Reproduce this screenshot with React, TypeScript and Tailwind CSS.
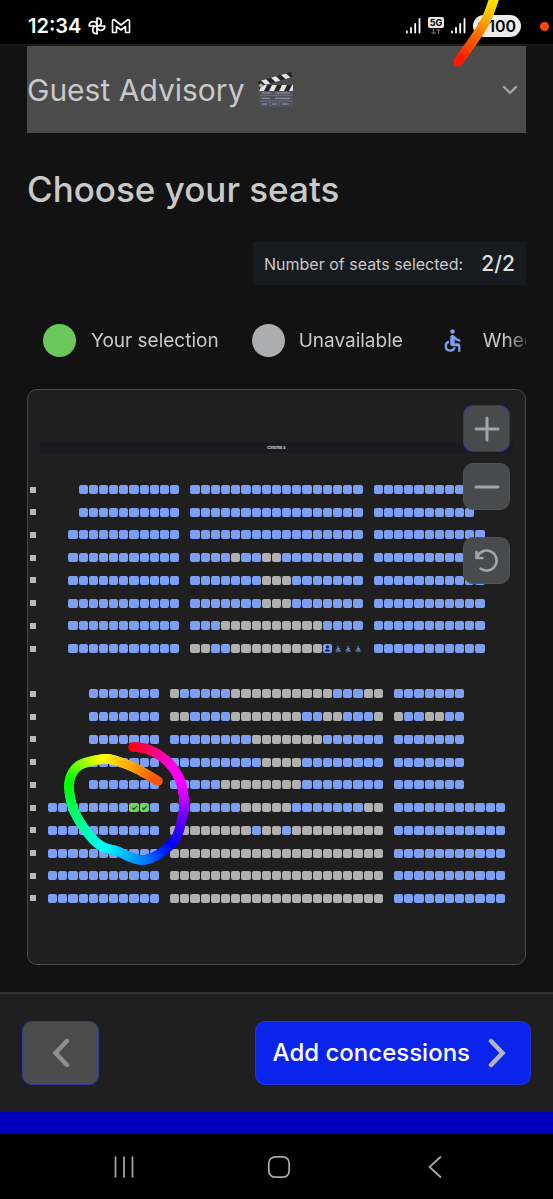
import { Fragment } from "react";
import { MdAccessible } from "react-icons/md";

type Block = { start: number; seats: string };
type Row = { label: string; blocks: Block[] } | null;

// b: available, g: unavailable, s: selected, p: companion, w: wheelchair space
const b = (n: number) => "b".repeat(n);
const g = (n: number) => "g".repeat(n);
const row = (label: string, ...blocks: [number, string][]): Row => ({
  label,
  blocks: blocks.map(([start, seats]) => ({ start, seats })),
});

const ROWS: Row[] = [
  row("A", [3, b(10)], [14, b(17)], [32, b(10)]),
  row("B", [3, b(10)], [14, b(17)], [32, b(10)]),
  row("C", [2, b(11)], [14, b(17)], [32, b(11)]),
  row("D", [2, b(11)], [14, b(4) + g(1) + b(2) + g(2) + b(8)], [32, b(11)]),
  row("E", [2, b(11)], [14, b(7) + g(3) + b(7)], [32, b(11)]),
  row("F", [2, b(11)], [14, b(7) + g(3) + b(7)], [32, b(11)]),
  row("G", [2, b(11)], [14, b(3) + g(10) + b(4)], [32, b(11)]),
  row("H", [2, b(11)], [14, g(2) + b(2) + g(9) + "pwww"], [32, b(11)]),
  null,
  row("J", [4, b(7)], [12, g(1) + b(5) + g(10) + b(3) + g(2)], [34, b(7)]),
  row("K", [4, b(7)], [12, g(2) + b(4) + g(7) + b(2) + g(2) + b(3) + g(1)], [34, "gbbggbb"]),
  row("L", [4, b(7)], [12, b(8) + g(7) + b(6)], [34, b(7)]),
  row("M", [4, b(7)], [12, b(9) + g(4) + b(8)], [34, b(7)]),
  row("N", [4, b(7)], [12, b(5) + g(8) + b(8)], [34, b(7)]),
  row("O", [0, b(8) + "ss" + b(1)], [12, b(7) + g(5) + b(7) + g(2)], [34, b(11)]),
  row("P", [0, b(11)], [12, g(8) + b(1) + g(2) + b(1) + g(9)], [34, b(11)]),
  row("Q", [0, b(11)], [12, g(21)], [34, b(11)]),
  row("R", [0, b(11)], [12, g(21)], [34, b(11)]),
  row("S", [0, b(11)], [12, g(21)], [34, b(11)]),
];

const SEAT_CLASS: Record<string, string> = {
  b: "bg-[#7b9ff5]",
  g: "bg-[#b0b0ae]",
  s: "bg-[#77cf6b]",
  p: "bg-[#7b9ff5]",
  w: "text-[#7b9ff5]",
};

function Seat({ kind, name }: { kind: string; name: string }) {
  return (
    <button
      type="button"
      aria-label={name}
      disabled={kind === "g"}
      className={`flex h-[9px] items-center justify-center rounded-[2px] ${SEAT_CLASS[kind]}`}
    >
      {kind === "s" && (
        <svg viewBox="0 0 9 9" className="size-[9px]" fill="none" stroke="#17501b" strokeWidth="1.2">
          <path d="M2 4.7 3.8 6.3 7 2.8" />
        </svg>
      )}
      {kind === "p" && (
        <svg viewBox="0 0 9 9" className="size-[9px]" fill="#12234f">
          <circle cx="4.5" cy="3" r="1.7" />
          <path d="M1.8 7.6V6.6Q2 5.4 4.5 5.3 7 5.4 7.2 6.6v1z" />
        </svg>
      )}
      {kind === "w" && <MdAccessible size={8} />}
    </button>
  );
}

function SeatMap() {
  return (
    <div className="flex aspect-[458/419] flex-col justify-between">
      {ROWS.map((r, i) =>
        r === null ? (
          <div key={i} className="h-[9px]" />
        ) : (
          <div key={i} className="flex items-center">
            <span className="-ml-[18px] mr-3 size-[6px] shrink-0 bg-[#b8b8b6]" />
            <div className="grid flex-1 grid-cols-[repeat(45,minmax(0,1fr))] gap-px">
              {r.blocks.map((blk, bi) => {
                const prev = r.blocks[bi - 1];
                const from = prev ? prev.start + prev.seats.length : 0;
                const space = blk.start - from;
                return (
                  <Fragment key={blk.start}>
                    {Array.from({ length: space }, (_, k) => (
                      <span key={`gap${k}`} />
                    ))}
                    {[...blk.seats].map((kind, k) => (
                      <Seat key={k} kind={kind} name={`Seat ${r.label}${blk.start + k + 1}`} />
                    ))}
                  </Fragment>
                );
              })}
            </div>
          </div>
        ),
      )}
    </div>
  );
}

// x, y, hue
type Point = [number, number, number];

const LOOP: Point[] = [
  [133, 747, 358], [147, 749, 345], [162, 757, 325], [173, 768, 308], [181, 783, 300],
  [184, 800, 290], [183, 814, 274], [177, 836, 252], [167, 848, 240], [154, 857, 226],
  [142, 860, 212], [130, 857, 204], [117, 851, 194], [103, 847, 182], [92, 838, 172],
  [80, 822, 158], [72, 805, 142], [69, 785, 124], [73, 772, 114], [82, 764, 95],
  [103, 759, 65], [117, 761, 52], [137, 769, 38], [158, 781, 20],
];

const TAIL: Point[] = [
  [495, -4, 60], [487, 18, 46], [477, 35, 30], [458, 62, 6],
];

function smooth(points: Point[]): Point[] {
  const out: Point[] = [];
  const steps = 8;
  for (let i = 0; i < points.length - 1; i++) {
    const p0 = points[Math.max(0, i - 1)];
    const p1 = points[i];
    const p2 = points[i + 1];
    const p3 = points[Math.min(points.length - 1, i + 2)];
    for (let s = 0; s < steps; s++) {
      const t = s / steps;
      const at = (k: 0 | 1) =>
        0.5 *
        (2 * p1[k] +
          (p2[k] - p0[k]) * t +
          (2 * p0[k] - 5 * p1[k] + 4 * p2[k] - p3[k]) * t * t +
          (3 * p1[k] - p0[k] - 3 * p2[k] + p3[k]) * t * t * t);
      out.push([at(0), at(1), p1[2] + (p2[2] - p1[2]) * t]);
    }
  }
  out.push(points[points.length - 1]);
  return out;
}

function RainbowStroke({ points }: { points: Point[] }) {
  const pts = smooth(points);
  return (
    <g strokeWidth="9.5" strokeLinecap="round">
      {pts.slice(1).map((p, i) => (
        <line key={i} x1={pts[i][0]} y1={pts[i][1]} x2={p[0]} y2={p[1]} stroke={`hsl(${p[2]} 100% 50%)`} />
      ))}
    </g>
  );
}

function SignalIcon() {
  return (
    <svg viewBox="0 0 15 16" className="h-4 w-[15px]" fill="none" stroke="#fff" strokeWidth="1.8" strokeLinecap="round">
      <path d="M1 13.5v1M5 10v4.5M9.2 6v8.5M13.5 1v13.5" />
    </svg>
  );
}

function StatusBar() {
  return (
    <div className="flex h-11 items-center bg-black pt-2 pr-1 pl-7 text-white">
      <span className="text-[20px] leading-6 font-semibold">12:34</span>
      <svg viewBox="0 0 18 18" className="ml-[7px] size-[18px]" fill="none" stroke="#fff" strokeWidth="1.7" strokeLinejoin="round">
        <path d="M9 9V1.2C12 1.2 13.3 3 13.3 5.2 13.3 7 12 9 9 9ZM9 9h7.8C16.8 12 15 13.3 12.8 13.3 11 13.3 9 12 9 9ZM9 9v7.8C6 16.8 4.7 15 4.7 12.8 4.7 11 6 9 9 9ZM9 9H1.2C1.2 6 3 4.7 5.2 4.7 7 4.7 9 6 9 9Z" />
      </svg>
      <svg viewBox="0 0 20 16" className="ml-[5px] h-4 w-5" fill="none" stroke="#fff" strokeWidth="1.6" strokeLinejoin="round">
        <path d="M1.5 14.5V3Q1.5 1.5 3 1.5L10 7 17 1.5Q18.5 1.5 18.5 3V14.5H14.5V8.5L10 12 5.5 8.5V14.5Z" />
      </svg>
      <div className="ml-auto flex items-center gap-[7px]">
        <SignalIcon />
        <svg viewBox="0 0 16 20" className="h-5 w-4">
          <rect width="16" height="11" y="1" rx="2" fill="#e8e8e8" />
          <text x="8" y="10" textAnchor="middle" fontSize="9" fontWeight="700" fill="#000">5G</text>
          <path d="M5.5 13v5M3.5 16l2 2 2-2M10.5 18v-5M8.5 15l2-2 2 2" fill="none" stroke="#777" />
        </svg>
        <SignalIcon />
        <span className="flex h-[22px] w-12 items-center justify-end gap-[2px] rounded-full bg-[#ececec] pr-[5px] text-[16px] font-semibold text-black">
          <svg viewBox="0 0 9 12" className="h-3 w-[9px]" fill="none" stroke="#111" strokeWidth="2" strokeLinecap="round">
            <path d="M7 1.5A5 5 0 0 0 1.5 7" />
          </svg>
          100
        </span>
        <span className="ml-3 size-[9px] rounded-full bg-[#ff4512]" />
      </div>
    </div>
  );
}

function Clapper() {
  return (
    <svg viewBox="0 0 38 38" className="size-[38px]">
      <rect x="2" y="16" width="34" height="20" rx="1" fill="#51525f" />
      <rect x="2" y="14" width="34" height="6" fill="#25262a" />
      <path d="M5 14h5l-3 6H2zM15 14h5l-3 6h-5zM25 14h5l-3 6h-5zM35 14h1v5l-.5 1H32z" fill="#e4e4e4" />
      <path d="M1 10.5 34 1l1.5 5L2.5 15.5z" fill="#25262a" />
      <path d="m4 9.6 5-1.4 4.5 4.2-5 1.4zM14 6.8l5-1.5 4.5 4.2-5 1.4zM24 3.9l5-1.5 4.5 4.2-5 1.4z" fill="#e4e4e4" />
      <circle cx="4" cy="14.5" r="2" fill="#a9a9ad" />
      <path d="M3 24.5h32M3 30h32M13 30v5.5M22 30v5.5" stroke="#6c6d7c" />
      <path d="M5 22h9M18 22h15M5 27.3h8M18 27.3h15M5 33h5M15 33h5M25 33h7" stroke="#9a9ba8" />
    </svg>
  );
}

const mapButton =
  "flex size-[47px] items-center justify-center rounded-[10px] border bg-[#484a4c] text-[#a2a4a7]";

export default function App() {
  return (
    <div className="relative flex min-h-screen flex-col overflow-hidden bg-[#121212] font-['Inter',sans-serif] text-[#c9c9c9]">
      <StatusBar />
      <main className="border-t-2 border-[#1b1b1b] px-[27px]">
        <button type="button" className="flex h-[87px] w-full items-center bg-[#4b4b4b] pr-2 text-left">
          <span className="text-[30px] leading-9">Guest Advisory</span>
          <span className="ml-3"><Clapper /></span>
          <svg viewBox="0 0 16 10" className="ml-auto h-[10px] w-4" fill="none" stroke="#a5a5a5" strokeWidth="2.4" strokeLinecap="round" strokeLinejoin="round">
            <path d="m2 2 6 6 6-6" />
          </svg>
        </button>
        <h1 className="mt-9 text-[35px] leading-10 font-medium">Choose your seats</h1>
        <div className="mt-[33px] flex justify-end">
          <p className="flex h-[43px] w-[273px] items-center justify-between bg-[#171a1f] px-[11px] text-[16px]">
            Number of seats selected:
            <strong className="text-[21px] font-medium text-[#dedede]">2/2</strong>
          </p>
        </div>
        <ul className="mt-[39px] flex items-center gap-[33px] overflow-hidden mask-r-from-96% mask-r-to-102% pl-4 text-[19px] leading-[33px] whitespace-nowrap">
          <li className="flex items-center gap-[15px]">
            <span className="size-[33px] rounded-full bg-[#6bc65b]" />
            Your selection
          </li>
          <li className="flex items-center gap-[14px]">
            <span className="size-[33px] rounded-full bg-[#abadae]" />
            Unavailable
          </li>
          <li className="flex items-center gap-[14px]">
            <span className="flex size-[33px] shrink-0 items-center justify-center text-[#7b9ff5]">
              <MdAccessible size={27} />
            </span>
            Wheelchair
          </li>
        </ul>
        <section className="relative mt-8 rounded-[10px] border border-[#474a4a] bg-[#1f1f1f] px-5 pt-[52px] pb-[61px]">
          <div className="-mx-2 mb-8 h-[11px] bg-[#1a1b22] text-center text-[4px] leading-[11px] font-semibold text-[#e0e0e0]">
            Cinema 3
          </div>
          <SeatMap />
          <div className="absolute top-[15px] right-[15px] flex flex-col">
            <button type="button" aria-label="Zoom in" className={`${mapButton} border-[#2c359f]`}>
              <svg viewBox="0 0 26 26" className="size-[26px]" stroke="currentColor" strokeWidth="3" strokeLinecap="round">
                <path d="M13 2v22M2 13h22" />
              </svg>
            </button>
            <button type="button" aria-label="Zoom out" className={`${mapButton} mt-[11px] border-[#505355]`}>
              <svg viewBox="0 0 26 26" className="size-[26px]" stroke="currentColor" strokeWidth="3" strokeLinecap="round">
                <path d="M2 13h22" />
              </svg>
            </button>
            <button type="button" aria-label="Reset" className={`${mapButton} mt-[27px] border-[#505355]`}>
              <svg viewBox="0 0 26 26" className="size-[26px]" fill="none" stroke="currentColor" strokeWidth="2.6" strokeLinecap="round" strokeLinejoin="round">
                <path d="M2.5 4v6H8.5M3 9.7A10 10 0 1 1 6.5 20.5" />
              </svg>
            </button>
          </div>
        </section>
      </main>
      <footer className="mt-[27px] flex justify-between border-t-2 border-[#343738] bg-[#1f1f1f] px-[22px] pt-[27px] pb-[27px]">
        <button type="button" aria-label="Back" className="flex h-16 w-[77px] items-center justify-center rounded-[10px] border border-[#333c96] bg-[#4b4b4b]">
          <svg viewBox="0 0 18 30" className="h-[30px] w-[18px]" fill="none" stroke="#8f8f8f" strokeWidth="4.5" strokeLinecap="round" strokeLinejoin="miter">
            <path d="M15 3 3.5 15 15 27" />
          </svg>
        </button>
        <button type="button" className="flex h-16 items-center rounded-[10px] border border-[#2336d8] bg-[#0a24ec] pr-6 pl-[17px] text-[24px] font-medium text-white">
          Add concessions
          <svg viewBox="0 0 18 30" className="ml-[18px] h-[30px] w-[18px]" fill="none" stroke="#b4b6c4" strokeWidth="4.5" strokeLinecap="round" strokeLinejoin="miter">
            <path d="M3 3 14.5 15 3 27" />
          </svg>
        </button>
      </footer>
      <div className="h-[22px] bg-[#0000bd]" />
      <nav className="grid h-[65px] grid-cols-3 items-center bg-black pr-10 pl-[46px]">
        <button type="button" aria-label="Recents" className="flex justify-center">
          <svg viewBox="0 0 24 24" className="size-6" stroke="#a8a8a8" strokeWidth="1.7">
            <path d="M3.5 1.5v21M12 1.5v21M20.5 1.5v21" />
          </svg>
        </button>
        <button type="button" aria-label="Home" className="flex justify-center">
          <svg viewBox="0 0 24 24" className="size-6" fill="none" stroke="#a8a8a8" strokeWidth="1.8">
            <rect x="1.8" y="1.8" width="20.4" height="20.4" rx="6.5" />
          </svg>
        </button>
        <button type="button" aria-label="Go back" className="flex justify-center">
          <svg viewBox="0 0 14 24" className="h-6 w-[14px]" fill="none" stroke="#a8a8a8" strokeWidth="1.8">
            <path d="M13 1.5 1.5 12 13 22.5" />
          </svg>
        </button>
      </nav>
      <svg aria-hidden="true" className="pointer-events-none absolute top-0 left-0 h-[1199px] w-[553px]" fill="none">
        <RainbowStroke points={LOOP} />
        <RainbowStroke points={TAIL} />
      </svg>
    </div>
  );
}
